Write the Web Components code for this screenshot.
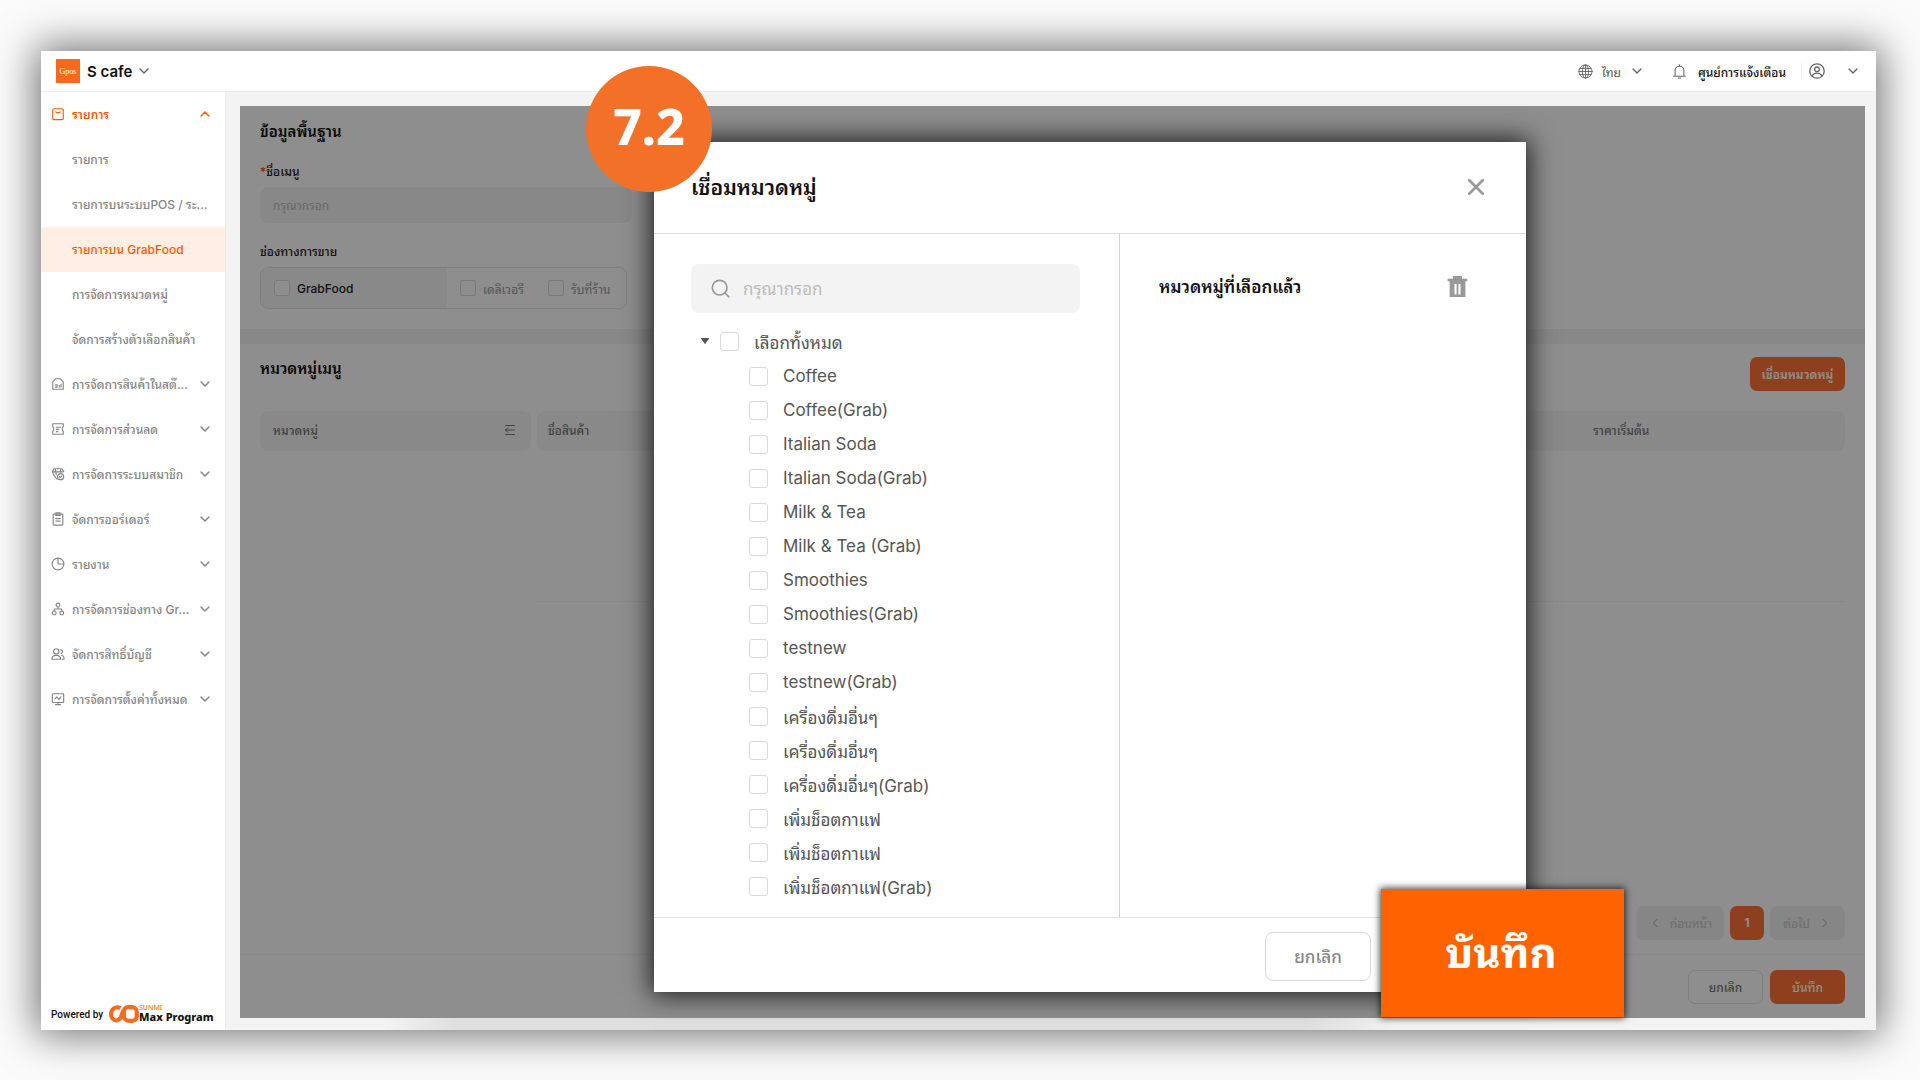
<!DOCTYPE html>
<html lang="th">
<head>
<meta charset="utf-8">
<title>S cafe</title>
<style>
  html, body { margin: 0; height: 100%; }
  body { background: #fbfbfb; overflow: hidden; font-family: Inter, "Noto Sans Thai Looped", "Noto Sans Thai", "Noto Sans", sans-serif; font-size: 12px; color: #222; }
</style>
</head>
<body>
<pos-app></pos-app>
<script>
const define = (name, html) => customElements.define(name, class extends HTMLElement {
  connectedCallback() {
    if (this.shadowRoot) return;
    const t = document.createElement('template');
    t.innerHTML = typeof html === 'function' ? html(this) : html;
    this.attachShadow({ mode: 'open' }).append(t.content.cloneNode(true));
  }
});

const controls = `
  * { box-sizing: border-box; }
  button { font: inherit; color: inherit; background: none; border: 0; padding: 0; margin: 0; white-space: nowrap; display: flex; align-items: center; justify-content: center; }
  input { font: inherit; margin: 0; }
  input[type=checkbox] { appearance: none; width: 19px; height: 19px; border: 1px solid #d9d9d9; border-radius: 3px; background: #fff; flex: none; }
  h1, h2, h3 { margin: 0; font-size: inherit; }
`;

const icons = {
  down: '<path d="M3.500 5.700 8 10.200l4.500-4.500"/>',
  up: '<path d="M3.500 10.200 8 5.700l4.500 4.500"/>',
  left: '<path d="M10 4 6 8l4 4"/>',
  right: '<path d="M6 4l4 4-4 4"/>',
  menu: '<rect x="2" y="2" width="12" height="12.500" rx="1.500"/><path d="M5.500 5.500c.8 1.200 4.200 1.200 5 0"/>',
  stock: '<path d="M2 14V5.500L5.500 2h5L14 5.500V14z"/><path d="M5 9h2v2M5 11.500h2M9.500 11.500V9.500M11.500 11.500V8"/>',
  discount: '<path d="M2 2h12v3.500c-1.500.8-1.500 4.200 0 5V14H2v-3.500c1.500-.8 1.500-4.200 0-5zM6 6h5M6 8.500h3M6 11h2"/>',
  member: '<path d="M7 14 3 9 1.500 5 3.500 2h9l2 3M2 5.500h12M5 2.500 6 9M11 2.500V6"/><circle cx="11" cy="11" r="3.500"/><path d="m9.700 11 1 1 1.600-1.700"/>',
  order: '<rect x="2.500" y="2.500" width="11" height="12.500" rx="1"/><path d="M5.500 1h5v3h-5zM5.500 7.500h5M5.500 10.500h5"/>',
  report: '<circle cx="8" cy="8" r="6.700"/><path d="M8 1.500V8h6.500"/>',
  channel: '<circle cx="8" cy="3.500" r="2.200"/><circle cx="3.700" cy="12.500" r="2.200"/><circle cx="12.300" cy="12.500" r="2.200"/><path d="M8 6v2M3.700 10V8h8.600v2"/>',
  users: '<circle cx="6" cy="5" r="3"/><path d="M1 14c0-3.500 2-4.500 5-4.500s5 1 5 4.500zM10.500 3.200a2.200 2.200 0 1 1 1 4.300M12 9.500c2 .3 3 1.500 3 4.500h-2"/>',
  settings: '<rect x="1.500" y="2" width="13" height="10" rx="1"/><path d="M4.500 8l2-2.500 2.500 3 2.500-3M5 14.500h6M8 12v2.500"/>',
  globe: '<circle cx="8" cy="8" r="7"/><ellipse cx="8" cy="8" rx="3.300" ry="7"/><path d="M8 1v14M1 8h14M2 4.700h12M2 11.300h12"/>',
  bell: '<path d="M1.800 13h12.400M3.300 13V7a4.700 4.700 0 0 1 9.400 0v6M8 2.300V.8M6.800 15h2.400"/>',
  user: '<circle cx="8" cy="8" r="7.200"/><circle cx="8" cy="6.300" r="2.300"/><path d="M3.300 13.300c.5-2.300 2.200-3.100 4.700-3.100s4.200.8 4.700 3.100"/>',
  search: '<circle cx="7.300" cy="7.300" r="6.200"/><path d="m12 12 3 3"/>',
  close: '<path d="M2 2l12 12M14 2 2 14"/>',
  fold: '<path d="M2 2h12M6 8h8M2 14h12M5 5 2 8l3 3M2 8h4"/>',
  trash: '<path fill="currentColor" stroke="none" fill-rule="evenodd" d="M4.500 0h7v2H15.500v2H14v12H2V4H.5V2h4zM5.700 6v8h1.600V6zm3 0v8h1.600V6z"/>',
  caret: '<path fill="currentColor" stroke="none" d="M1 3h14L8 13z"/>'
};
define('ui-icon', el => `
  <style>:host { display: inline-flex; flex: none; } svg { display: block; overflow: visible; }</style>
  <svg width="${el.getAttribute('size') || 14}" height="${el.getAttribute('size') || 14}" viewBox="0 0 16 16" fill="none" stroke="currentColor"
    stroke-width="${el.getAttribute('stroke') || 1.3}" stroke-linecap="round" stroke-linejoin="round" aria-hidden="true">${icons[el.getAttribute('name')]}</svg>`);

define('app-header', `
  <style>${controls}
    :host { display: flex; align-items: center; height: 41px; flex: none; box-sizing: border-box; padding: 0 16px 0 15px; background: #fff; border-bottom: 1px solid #ececec; }
    .logo { width: 24px; height: 24px; background: #f76a1c; color: #fff; font-size: 8px; display: flex; align-items: center; justify-content: center; font-family: "Liberation Serif", serif; }
    .shop { font-size: 15px; font-weight: 600; color: #111; gap: 5px; margin-left: 7px; }
    .right { margin-left: auto; display: flex; align-items: center; color: #555; }
    .lang { gap: 9px; } .bell { gap: 11px; margin-left: 28px; font-weight: 500; color: #111; }
    .me { gap: 21px; margin-left: 15px; padding-left: 7px; border-left: 1px solid #eee; }
    ui-icon { color: #666; }
  </style>
  <span class="logo">Gpos</span>
  <button class="shop">S cafe <ui-icon name="down" stroke="1.6"></ui-icon></button>
  <div class="right">
    <button class="lang"><ui-icon name="globe" size="15" stroke="1"></ui-icon>ไทย<ui-icon name="down" stroke="1.6"></ui-icon></button>
    <button class="bell"><ui-icon name="bell" size="15" stroke="1.1"></ui-icon>ศูนย์การแจ้งเตือน</button>
    <button class="me" aria-label="บัญชี"><ui-icon name="user" size="16"></ui-icon><ui-icon name="down" stroke="1.6"></ui-icon></button>
  </div>`);

define('nav-item', el => `
  <style>
    :host { display: block; }
    a { box-sizing: border-box; display: flex; align-items: center; height: 45px; padding: 0 13px 1px 10px; color: #858585; text-decoration: none; font-weight: 500; }
    .icon { width: 21px; display: flex; flex: none; }
    .label { flex: 1; white-space: nowrap; overflow: hidden; padding-bottom: 1px; }
    :host([active]) a, :host([open]) a { color: #ff5a00; font-weight: 600; }
    :host([active]) a { background: #ffeee4; }
    :host([sub]) a { font-weight: 500; }
  </style>
  <a href="#"><span class="icon">${el.hasAttribute('icon') ? `<ui-icon name="${el.getAttribute('icon')}" size="14"></ui-icon>` : ''}</span>
  <span class="label"><slot></slot></span>${el.hasAttribute('icon') ? `<ui-icon name="${el.hasAttribute('open') ? 'up' : 'down'}" size="14" stroke="1.7"></ui-icon>` : ''}</a>`);

define('side-nav', `
  <style>
    :host { display: flex; flex-direction: column; width: 185px; flex: none; box-sizing: border-box; background: #fff; border-right: 1px solid #ebebeb; }
    nav { flex: 1; }
    footer { display: flex; align-items: center; padding: 0 0 7px 10px; color: #111; }
    .by { width: 58px; white-space: nowrap; font-family: Roboto, sans-serif; font-size: 10px; font-weight: 500; }
    .brand { display: flex; flex-direction: column; font-family: "Noto Sans", sans-serif; font-weight: 800; font-size: 11px; line-height: 12px; white-space: nowrap; }
    .brand small { font-size: 7px; line-height: 6px; color: #f97316; font-weight: 500; }
  </style>
  <nav>
    <nav-item icon="menu" open>รายการ</nav-item>
    <nav-item sub>รายการ</nav-item>
    <nav-item sub>รายการบนระบบPOS / ระ...</nav-item>
    <nav-item sub active>รายการบน GrabFood</nav-item>
    <nav-item sub>การจัดการหมวดหมู่</nav-item>
    <nav-item sub>จัดการสร้างตัวเลือกสินค้า</nav-item>
    <nav-item icon="stock">การจัดการสินค้าในสต๊...</nav-item>
    <nav-item icon="discount">การจัดการส่วนลด</nav-item>
    <nav-item icon="member">การจัดการระบบสมาชิก</nav-item>
    <nav-item icon="order">จัดการออร์เดอร์</nav-item>
    <nav-item icon="report">รายงาน</nav-item>
    <nav-item icon="channel">การจัดการช่องทาง Gr...</nav-item>
    <nav-item icon="users">จัดการสิทธิ์บัญชี</nav-item>
    <nav-item icon="settings">การจัดการตั้งค่าทั้งหมด</nav-item>
  </nav>
  <footer><span class="by">Powered by</span>
    <svg width="30" height="18" viewBox="0 0 30 18" fill="none" stroke="#f96a1c" aria-hidden="true"><path stroke-width="4" d="M11.500 3.200C7 .5 2 4 2 9c0 4 2.500 6.500 5.500 6.500C12.500 15.500 12 9 14.500 5.500"/><path stroke-width="4.200" d="M18 2.200h5c3 0 4.800 2.300 4.800 4.800v4c0 2.500-1.800 4.800-4.800 4.800h-3c-3 0-5.200-2.300-5.200-4.800V7c0-2.500 1.500-4.800 4-4.800"/></svg>
    <span class="brand"><small>SUNMI</small>Max Program</span></footer>`);

define('menu-page', `
  <style>${controls}
    :host { display: flex; flex-direction: column; gap: 15px; position: relative; background: #f4f4f4; flex: 1; min-height: 0; }
    section { background: #fff; padding: 1px 20px 0; }
    .basic { height: 223px; flex: none; }
    .menus { flex: 1; display: flex; flex-direction: column; padding: 0; }
    h2 { font-size: 15px; font-weight: 600; line-height: 50px; color: #111; }
    .label { display: block; line-height: 30px; color: #222; font-weight: 500; }
    .label i { color: #ff3b00; font-style: normal; }
    .name { display: block; width: 372px; height: 36px; border: 0; border-radius: 8px; background: #f5f5f5; padding: 0 13px; margin-bottom: 14px; }
    .name::placeholder { color: #bbb; }
    .channels { display: flex; width: 367px; height: 42px; border: 1px solid #e2e2e2; border-radius: 8px; overflow: hidden; }
    .channels label { display: flex; align-items: center; gap: 7px; color: #999; white-space: nowrap; }
    .channels .main { width: 186px; padding-left: 13px; background: #f6f6f6; color: #222; font-weight: 500; }
    .channels input { width: 16px; height: 16px; }
    .channels .opt { padding-left: 13px; width: 88px; }
    .row { display: flex; justify-content: space-between; align-items: flex-start; padding: 0 20px; height: 67px; }
    .primary { background: #ff7336; color: #fff; border-radius: 7px; height: 34px; font-weight: 600; padding-bottom: 2px; }
    .link { width: 95px; margin-top: 13px; }
    .tables { display: flex; gap: 6px; padding: 0 20px; align-items: flex-start; }
    table { border-collapse: collapse; table-layout: fixed; }
    th { height: 40px; background: #f7f7f7; text-align: left; font-weight: 500; color: #777; padding: 0 13px 3px; white-space: nowrap; }
    .cat { width: 271px; } .cat th { border-radius: 8px; padding: 0 15px 3px 13px; }
    .cat div { display: flex; justify-content: space-between; align-items: center; }
    .items { flex: 1; border-bottom: 1px solid #f4f4f4; height: 191px; }
    .items table { width: 100%; }
    .items th { padding: 0 11px 3px; }
    .items th:first-child { border-radius: 8px 0 0 8px; }
    .items th:last-child { border-radius: 0 8px 8px 0; width: 263px; }
    .pager { margin-top: auto; display: flex; justify-content: flex-end; gap: 6px; padding: 0 20px 14px; }
    .pager button { height: 34px; border-radius: 7px; background: #f1f1f1; color: #c4c4c4; padding-bottom: 1px; }
    .pager .page { width: 34px; background: #ff7336; color: #fff; font-weight: 700; }
    .pager .prev { width: 88px; gap: 8px; } .pager .next { width: 75px; gap: 8px; }
    .actions { display: flex; justify-content: flex-end; gap: 7px; padding: 15px 20px 14px; border-top: 1px solid #f4f4f4; }
    .actions button { width: 75px; height: 34px; border-radius: 7px; font-weight: 500; padding-bottom: 2px; }
    .cancel { border: 1px solid #e2e2e2; color: #777; }
    .scrim { position: absolute; inset: 0; background: rgba(0,0,0,.443); }
  </style>
  <section class="basic">
    <h2>ข้อมูลพื้นฐาน</h2>
    <label class="label" for="name"><i>*</i>ชื่อเมนู</label>
    <input class="name" id="name" placeholder="กรุณากรอก">
    <span class="label">ช่องทางการขาย</span>
    <div class="channels">
      <label class="main"><input type="checkbox">GrabFood</label>
      <label class="opt"><input type="checkbox">เดลิเวอรี</label>
      <label class="opt"><input type="checkbox">รับที่ร้าน</label>
    </div>
  </section>
  <section class="menus">
    <div class="row"><h2>หมวดหมู่เมนู</h2><button class="primary link">เชื่อมหมวดหมู่</button></div>
    <div class="tables">
      <table class="cat"><tr><th><div>หมวดหมู่ <ui-icon name="fold" size="12"></ui-icon></div></th></tr></table>
      <div class="items"><table><tr><th>ชื่อสินค้า</th><th>ราคาเริ่มต้น</th></tr></table></div>
    </div>
    <div class="pager">
      <button class="prev"><ui-icon name="left"></ui-icon>ก่อนหน้า</button>
      <button class="page">1</button>
      <button class="next">ต่อไป<ui-icon name="right"></ui-icon></button>
    </div>
    <div class="actions"><button class="cancel">ยกเลิก</button><button class="primary">บันทึก</button></div>
  </section>
  <div class="scrim"></div>`);

define('tree-option', el => `
  <style>${controls}
    :host { display: block; }
    label { display: flex; align-items: center; gap: 15px; height: 34px; padding-left: 58px; color: #555; font-size: 17px; white-space: nowrap; }
    :host([root]) label { padding: 0 0 2px 9px; }
    .caret { width: 10px; margin-right: -5px; display: flex; }
  </style>
  <label>${el.hasAttribute('root') ? '<span class="caret"><ui-icon name="caret" size="10"></ui-icon></span>' : ''}<input type="checkbox"><span><slot></slot></span></label>`);

define('category-dialog', `
  <style>${controls}
    :host { display: block; background: #fff; box-shadow: 0 0 24px 3px rgba(0,0,0,.8); font-size: 17px; }
    header { height: 92px; display: flex; align-items: center; justify-content: space-between; padding: 0 41px 1px 37px; border-bottom: 1px solid #dedede; }
    h2 { font-size: 21px; font-weight: 600; color: #111; padding-bottom: 3px; }
    ui-icon { color: #999; }
    .body { display: flex; height: 683px; }
    .pick { width: 466px; border-right: 1px solid #d0d0d0; padding: 30px 39px 0 37px; }
    .search { display: flex; align-items: center; gap: 13px; height: 49px; border-radius: 8px; background: #f3f3f3; padding: 0 20px; margin-bottom: 12px; }
    .search input { border: 0; background: none; flex: 1; min-width: 0; padding: 0; outline: 0; }
    .search input::placeholder { color: #bcbcbc; }
    .chosen { flex: 1; display: flex; justify-content: space-between; align-items: flex-start; padding: 39px 58px 0 39px; }
    h3 { font-weight: 600; color: #111; line-height: 28px; }
    .chosen button { height: 26px; }
    footer { height: 75px; border-top: 1px solid #dedede; padding: 14px 155px 0 0; display: flex; justify-content: flex-end; }
    footer button { width: 106px; height: 49px; border: 1px solid #d9d9d9; border-radius: 8px; color: #888; font-weight: 500; padding-bottom: 2px; }
  </style>
  <header><h2>เชื่อมหมวดหมู่</h2><button aria-label="ปิด"><ui-icon name="close" size="18" stroke="2.4"></ui-icon></button></header>
  <div class="body">
    <div class="pick">
      <label class="search"><ui-icon name="search" size="19" stroke="1.4"></ui-icon><input placeholder="กรุณากรอก"></label>
      <tree-option root>เลือกทั้งหมด</tree-option>
      <tree-option>Coffee</tree-option>
      <tree-option>Coffee(Grab)</tree-option>
      <tree-option>Italian Soda</tree-option>
      <tree-option>Italian Soda(Grab)</tree-option>
      <tree-option>Milk &amp; Tea</tree-option>
      <tree-option>Milk &amp; Tea (Grab)</tree-option>
      <tree-option>Smoothies</tree-option>
      <tree-option>Smoothies(Grab)</tree-option>
      <tree-option>testnew</tree-option>
      <tree-option>testnew(Grab)</tree-option>
      <tree-option>เครื่องดื่มอื่นๆ</tree-option>
      <tree-option>เครื่องดื่มอื่นๆ</tree-option>
      <tree-option>เครื่องดื่มอื่นๆ(Grab)</tree-option>
      <tree-option>เพิ่มช็อตกาแฟ</tree-option>
      <tree-option>เพิ่มช็อตกาแฟ</tree-option>
      <tree-option>เพิ่มช็อตกาแฟ(Grab)</tree-option>
    </div>
    <div class="chosen"><h3>หมวดหมู่ที่เลือกแล้ว</h3><button aria-label="ลบ"><ui-icon name="trash" size="21"></ui-icon></button></div>
  </div>
  <footer><button>ยกเลิก</button></footer>`);

define('save-callout', `
  <style>${controls}
    :host { display: block; }
    button { width: 100%; height: 100%; background: #ff6200; color: #fff; font-size: 42px; font-weight: 700; padding: 0 3px 9px 0; box-shadow: 0 0 7px 1px rgba(0,0,0,.75); }
  </style><button><slot></slot></button>`);

define('step-badge', `
  <style>
    :host { box-sizing: border-box; display: flex; align-items: center; justify-content: center; padding-bottom: 6px; border-radius: 50%; background: #f37028; color: #fff; font: 800 50px/1 "Noto Sans", sans-serif; }
  </style><slot></slot>`);

define('pos-app', `
  <style>
    :host { display: block; box-sizing: border-box; height: 100vh; padding: 51px 44px 50px 41px; }
    .frame { position: relative; height: 100%; display: flex; flex-direction: column; background: #f3f3f3; box-shadow: 0 0 38px 5px rgba(0,0,0,.55); }
    .main { flex: 1; display: flex; min-height: 0; }
    .content { flex: 1; display: flex; padding: 14px 11px 12px 14px;
      background: linear-gradient(90deg, #f3f3f3 160px, #dfdfdf 230px, #dfdfdf 1080px, #f3f3f3 1170px) bottom / 100% 12px no-repeat; }
    category-dialog { position: absolute; top: 91px; left: 613px; right: 350px; }
    save-callout { position: absolute; right: 252px; bottom: 13px; width: 243px; height: 128px; }
    step-badge { position: absolute; left: 545px; top: 15px; width: 126px; height: 126px; }
  </style>
  <div class="frame">
    <app-header></app-header>
    <div class="main"><side-nav></side-nav><div class="content"><menu-page></menu-page></div></div>
    <category-dialog role="dialog"></category-dialog>
    <save-callout>บันทึก</save-callout>
    <step-badge>7.2</step-badge>
  </div>`);
</script>
</body>
</html>
